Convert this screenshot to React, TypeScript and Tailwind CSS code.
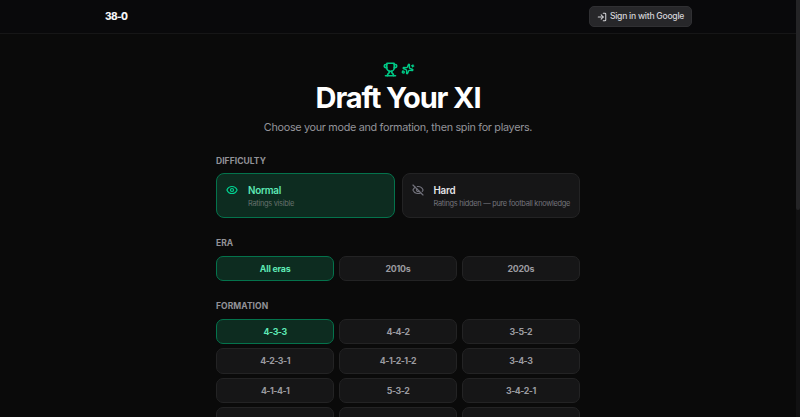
import { Eye, EyeOff, LogIn, Sparkles, Trophy } from "lucide-react";
import type { ReactNode } from "react";

const eras = ["All eras", "2010s", "2020s"];
const formations = [
  "4-3-3", "4-4-2", "3-5-2",
  "4-2-3-1", "4-1-2-1-2", "3-4-3",
  "4-1-4-1", "5-3-2", "3-4-2-1",
];

const active = "border-[#04734c] bg-[#0d2c20] text-[#5ee9b5]";
const idle = "border-[#232324] bg-[#161617] text-[#9b9ba0]";

function Label({ children }: { children: ReactNode }) {
  return <h2 className="h-3 text-[8.5px] font-bold leading-3 tracking-[0.05px] text-[#929298]">{children}</h2>;
}

function Options({ items, tracking, spare = 0 }: { items: string[]; tracking: string; spare?: number }) {
  return (
    <div className="grid grid-cols-3 gap-x-[4.6px] gap-y-[4px]">
      {items.map((item, i) => (
        <button
          key={item}
          className={`h-[25.4px] rounded-[7px] border pt-px text-[8.8px] font-bold leading-3 ${tracking} ${i === 0 ? active : idle}`}
        >
          {item}
        </button>
      ))}
      {Array.from({ length: spare }, (_, i) => (
        <div key={i} className={`h-[25.4px] rounded-[7px] border ${idle}`} />
      ))}
    </div>
  );
}

export default function App() {
  return (
    <div className="flex h-[417px] overflow-hidden bg-[#0a0a0a] font-['Inter','Liberation_Sans',sans-serif]">
      <div className="min-w-0 flex-1">
        <header className="h-[34px] border-b border-[#161617] bg-[#09090b]">
          <div className="mx-auto flex h-[33px] w-[588px] items-center justify-between">
            <span className="pl-px text-[10px] font-extrabold tracking-[-0.6px] text-[#f4f4f5]">38-0</span>
            <button className="flex h-[21px] w-[103px] items-center justify-center gap-[3px] whitespace-nowrap rounded-[5px] border border-[#303033] bg-[#27272a] text-[8.6px] font-medium tracking-[-0.26px] text-[#d4d4d8]">
              <LogIn size={10} strokeWidth={2.5} className="shrink-0" />
              Sign in with Google
            </button>
          </div>
        </header>
        <main className="mx-auto w-[364px] pt-[27px]">
          <div className="flex flex-col items-center">
            <div className="flex h-4 items-center gap-[4px] text-[#00c986]">
              <Trophy size={15} strokeWidth={2.6} />
              <Sparkles size={12} strokeWidth={2.8} className="rotate-12" />
            </div>
            <h1 className="mt-[2px] h-[37px] whitespace-nowrap text-[29px] font-bold leading-[37px] tracking-[-1.1px] text-white">Draft Your XI</h1>
            <p className="mt-[4px] h-4 whitespace-nowrap text-[10.8px] leading-4 tracking-[-0.3px] text-[#94949a]">
              Choose your mode and formation, then spin for players.
            </p>
          </div>
          <section className="mt-[19px]">
            <Label>DIFFICULTY</Label>
            <div className="mt-[6px] grid grid-cols-2 gap-[7px]">
              <button className={`flex h-[45px] gap-[10px] rounded-[8px] border pl-[9px] pt-[10px] text-left ${active}`}>
                <Eye size={12} strokeWidth={2.4} className="shrink-0 text-[#00d492]" />
                <span className="block">
                  <span className="block text-[9.8px] font-semibold leading-[13px] tracking-[-0.22px]">Normal</span>
                  <span className="block whitespace-nowrap text-[7.4px] leading-[13px] tracking-[-0.28px] text-[#66716d]">Ratings visible</span>
                </span>
              </button>
              <button className={`flex h-[45px] gap-[10px] rounded-[8px] border pl-[9px] pt-[10px] text-left ${idle}`}>
                <EyeOff size={12} strokeWidth={2.3} className="shrink-0 text-[#71717b]" />
                <span className="block">
                  <span className="block text-[9.8px] font-semibold leading-[13px] tracking-[-0.22px] text-[#e4e4e7]">Hard</span>
                  <span className="block whitespace-nowrap text-[7.4px] leading-[13px] tracking-[-0.28px] text-[#74747b]">Ratings hidden — pure football knowledge</span>
                </span>
              </button>
            </div>
          </section>
          <section className="mt-[19.3px]">
            <Label>ERA</Label>
            <div className="mt-[6.7px]"><Options items={eras} tracking="tracking-[-0.2px]" /></div>
          </section>
          <section className="mt-[19px]">
            <Label>FORMATION</Label>
            <div className="mt-[6.4px]"><Options items={formations} tracking="tracking-[-0.48px]" spare={3} /></div>
          </section>
        </main>
      </div>
      <div className="w-1 bg-[#111112]">
        <div className="h-[210px] rounded-b-sm bg-[#242426]" />
      </div>
    </div>
  );
}
